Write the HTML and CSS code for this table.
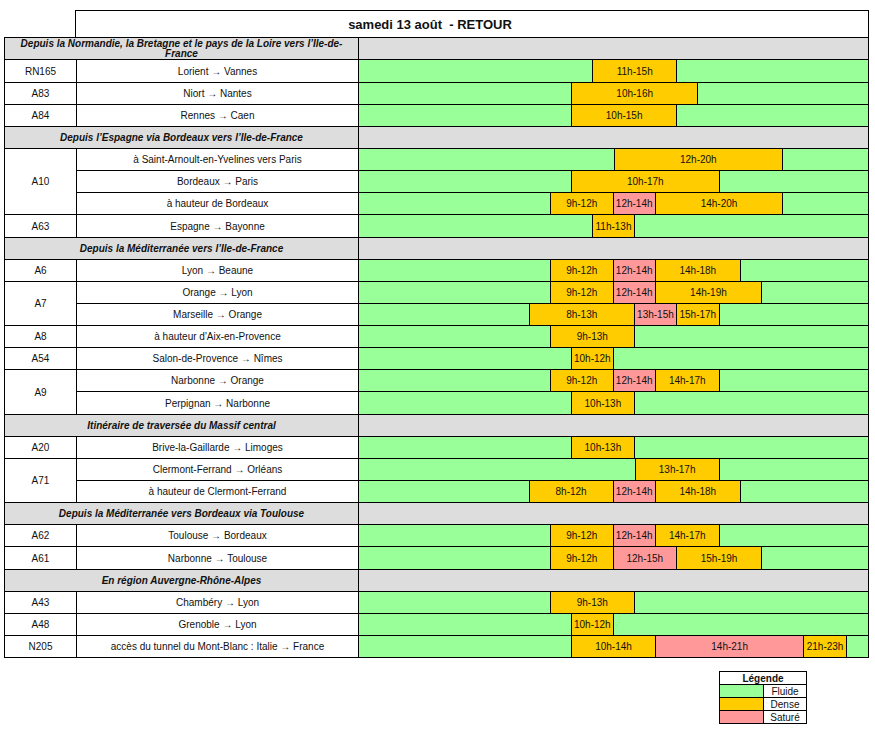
FILE: index.html
```html
<!DOCTYPE html>
<html lang="fr">
<head>
<meta charset="utf-8">
<title>samedi 13 août - RETOUR</title>
<link rel="stylesheet" href="styles.css">
</head>
<body>
<div class="page">
  <div class="title"><span>samedi 13 août&nbsp; - RETOUR</span></div>
  <table class="grid">
    <colgroup><col class="c-road"><col class="c-route"><col class="c-bar"></colgroup>
    <tbody>
      <tr class="sec"><td colspan="2" class="sec-name two">Depuis la Normandie, la Bretagne et le pays de la Loire vers l’Ile-de-France</td><td class="sec-bar"></td></tr>
      <tr class="tall"><td>RN165</td><td>Lorient → Vannes</td><td class="bar"><div class="track"><span class="seg d" style="grid-column:12/16">11h-15h</span></div></td></tr>
      <tr><td>A83</td><td>Niort → Nantes</td><td class="bar"><div class="track"><span class="seg d" style="grid-column:11/17">10h-16h</span></div></td></tr>
      <tr><td>A84</td><td>Rennes → Caen</td><td class="bar"><div class="track"><span class="seg d" style="grid-column:11/16">10h-15h</span></div></td></tr>

      <tr class="sec"><td colspan="2" class="sec-name">Depuis l’Espagne via Bordeaux vers l’Ile-de-France</td><td class="sec-bar"></td></tr>
      <tr><td rowspan="3">A10</td><td>à Saint-Arnoult-en-Yvelines vers Paris</td><td class="bar"><div class="track"><span class="seg d" style="grid-column:13/21">12h-20h</span></div></td></tr>
      <tr><td>Bordeaux → Paris</td><td class="bar"><div class="track"><span class="seg d" style="grid-column:11/18">10h-17h</span></div></td></tr>
      <tr><td>à hauteur de Bordeaux</td><td class="bar"><div class="track"><span class="seg d" style="grid-column:10/13">9h-12h</span><span class="seg s" style="grid-column:13/15">12h-14h</span><span class="seg d" style="grid-column:15/21">14h-20h</span></div></td></tr>
      <tr class="tall"><td>A63</td><td>Espagne → Bayonne</td><td class="bar"><div class="track"><span class="seg d" style="grid-column:12/14">11h-13h</span></div></td></tr>

      <tr class="sec"><td colspan="2" class="sec-name">Depuis la Méditerranée vers l’Ile-de-France</td><td class="sec-bar"></td></tr>
      <tr><td>A6</td><td>Lyon → Beaune</td><td class="bar"><div class="track"><span class="seg d" style="grid-column:10/13">9h-12h</span><span class="seg s" style="grid-column:13/15">12h-14h</span><span class="seg d" style="grid-column:15/19">14h-18h</span></div></td></tr>
      <tr><td rowspan="2">A7</td><td>Orange → Lyon</td><td class="bar"><div class="track"><span class="seg d" style="grid-column:10/13">9h-12h</span><span class="seg s" style="grid-column:13/15">12h-14h</span><span class="seg d" style="grid-column:15/20">14h-19h</span></div></td></tr>
      <tr><td>Marseille → Orange</td><td class="bar"><div class="track"><span class="seg d" style="grid-column:9/14">8h-13h</span><span class="seg s" style="grid-column:14/16">13h-15h</span><span class="seg d" style="grid-column:16/18">15h-17h</span></div></td></tr>
      <tr><td>A8</td><td>à hauteur d'Aix-en-Provence</td><td class="bar"><div class="track"><span class="seg d" style="grid-column:10/14">9h-13h</span></div></td></tr>
      <tr><td>A54</td><td>Salon-de-Provence → Nîmes</td><td class="bar"><div class="track"><span class="seg d" style="grid-column:11/13">10h-12h</span></div></td></tr>
      <tr><td rowspan="2">A9</td><td>Narbonne → Orange</td><td class="bar"><div class="track"><span class="seg d" style="grid-column:10/13">9h-12h</span><span class="seg s" style="grid-column:13/15">12h-14h</span><span class="seg d" style="grid-column:15/18">14h-17h</span></div></td></tr>
      <tr class="tall"><td>Perpignan → Narbonne</td><td class="bar"><div class="track"><span class="seg d" style="grid-column:11/14">10h-13h</span></div></td></tr>

      <tr class="sec"><td colspan="2" class="sec-name">Itinéraire de traversée du Massif central</td><td class="sec-bar"></td></tr>
      <tr><td>A20</td><td>Brive-la-Gaillarde → Limoges</td><td class="bar"><div class="track"><span class="seg d" style="grid-column:11/14">10h-13h</span></div></td></tr>
      <tr><td rowspan="2">A71</td><td>Clermont-Ferrand → Orléans</td><td class="bar"><div class="track"><span class="seg d" style="grid-column:14/18">13h-17h</span></div></td></tr>
      <tr><td>à hauteur de Clermont-Ferrand</td><td class="bar"><div class="track"><span class="seg d" style="grid-column:9/13">8h-12h</span><span class="seg s" style="grid-column:13/15">12h-14h</span><span class="seg d" style="grid-column:15/19">14h-18h</span></div></td></tr>

      <tr class="sec"><td colspan="2" class="sec-name">Depuis la Méditerranée vers Bordeaux via Toulouse</td><td class="sec-bar"></td></tr>
      <tr><td>A62</td><td>Toulouse → Bordeaux</td><td class="bar"><div class="track"><span class="seg d" style="grid-column:10/13">9h-12h</span><span class="seg s" style="grid-column:13/15">12h-14h</span><span class="seg d" style="grid-column:15/18">14h-17h</span></div></td></tr>
      <tr class="tall"><td>A61</td><td>Narbonne → Toulouse</td><td class="bar"><div class="track"><span class="seg d" style="grid-column:10/13">9h-12h</span><span class="seg s" style="grid-column:13/16">12h-15h</span><span class="seg d" style="grid-column:16/20">15h-19h</span></div></td></tr>

      <tr class="sec"><td colspan="2" class="sec-name">En région Auvergne-Rhône-Alpes</td><td class="sec-bar"></td></tr>
      <tr><td>A43</td><td>Chambéry → Lyon</td><td class="bar"><div class="track"><span class="seg d" style="grid-column:10/14">9h-13h</span></div></td></tr>
      <tr><td>A48</td><td>Grenoble → Lyon</td><td class="bar"><div class="track"><span class="seg d" style="grid-column:11/13">10h-12h</span></div></td></tr>
      <tr><td>N205</td><td>accès du tunnel du Mont-Blanc : Italie → France</td><td class="bar"><div class="track"><span class="seg d" style="grid-column:11/15">10h-14h</span><span class="seg s" style="grid-column:15/22">14h-21h</span><span class="seg d" style="grid-column:22/24">21h-23h</span></div></td></tr>
    </tbody>
  </table>

  <div class="legend-wrap">
    <table class="legend">
      <tr><th colspan="2">Légende</th></tr>
      <tr><td class="sw g"></td><td>Fluide</td></tr>
      <tr><td class="sw o"></td><td>Dense</td></tr>
      <tr><td class="sw p"></td><td>Saturé</td></tr>
    </table>
  </div>
</div>
</body>
</html>
```
FILE: styles.css
```css
* { box-sizing: border-box; }
html, body { margin: 0; padding: 0; background: #fff; }
body {
  font-family: "Liberation Sans", Arial, sans-serif;
  color: #111;
}
.page {
  padding: 10px 0 0 4px;
  width: 875px;
}
.title {
  margin-left: 71px;
  width: 794px;
  height: 27px;
  border: 1px solid #000;
  border-bottom: none;
  display: flex;
  align-items: center;
  justify-content: center;
  padding-right: 84px;
  font-weight: bold;
  font-size: 13px;
}
.grid {
  border-collapse: collapse;
  table-layout: fixed;
  width: 864px;
  font-size: 10px;
}
.c-road { width: 72px; }
.c-route { width: 282px; }
.c-bar { width: 510px; }
.grid td {
  border: 1px solid #000;
  padding: 0;
  height: 22px;
  text-align: center;
  vertical-align: middle;
  line-height: 11px;
}
.grid tr.tall td { height: 23px; }
.sec td { background: #ddd; }
.sec-name {
  font-weight: bold;
  font-style: italic;
  padding: 0 4px;
}
.sec-name.two { line-height: 10px; }
.grid td.bar { background: #99ff99; }
.track {
  display: grid;
  grid-template-columns: repeat(24, 1fr);
  height: 21px;
}
.tall .track { height: 22px; }
.seg {
  grid-row: 1;
  display: flex;
  align-items: center;
  justify-content: center;
  border-left: 1px solid #000;
  border-right: 1px solid #000;
  white-space: nowrap;
  overflow: hidden;
}
.seg + .seg { border-left: none; }
.seg.d { background: #ffcc00; }
.seg.s { background: #ff9999; }

.legend-wrap {
  display: flex;
  padding: 13px 0 0 715px;
}
.legend {
  border-collapse: collapse;
  font-size: 10px;
}
.legend th, .legend td {
  border: 1px solid #000;
  padding: 0;
  height: 13px;
  line-height: 11px;
  text-align: center;
}
.legend th { width: 87px; font-weight: bold; }
.legend td.sw { width: 44px; }
.legend td { width: 43px; }
.sw.g { background: #99ff99; }
.sw.o { background: #ffcc00; }
.sw.p { background: #ff9999; }
```
